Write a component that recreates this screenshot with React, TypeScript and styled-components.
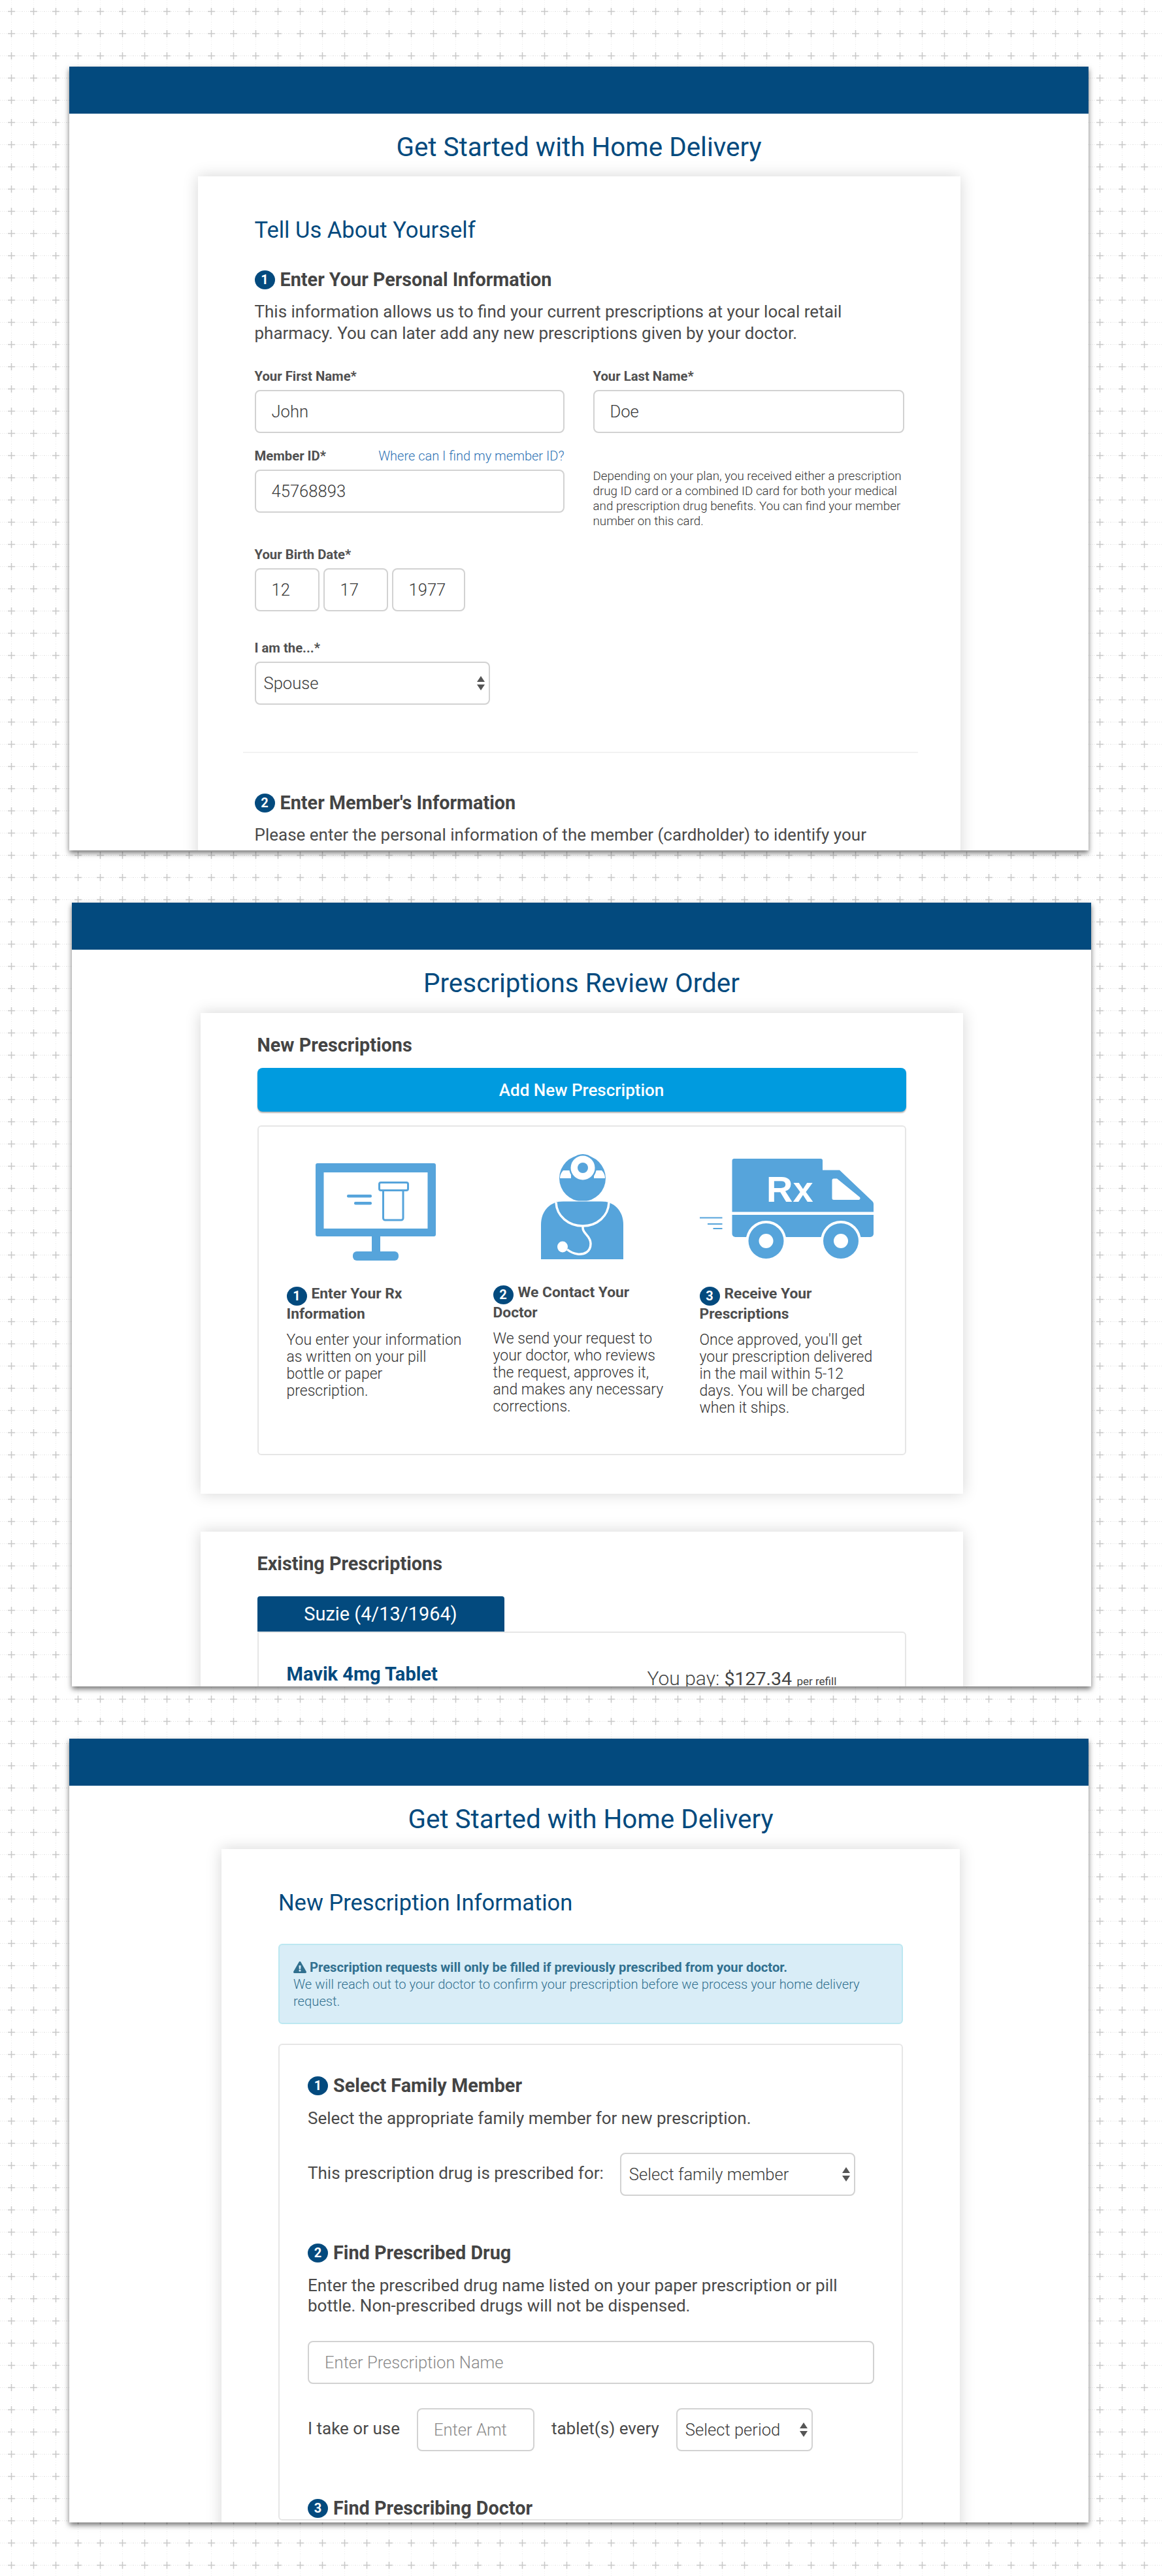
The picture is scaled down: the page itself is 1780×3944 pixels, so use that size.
import React from "react";
import styled, { createGlobalStyle } from "styled-components";
import { FaExclamationTriangle } from "react-icons/fa";

const NAVY = "#034a7e";
const ICON_BLUE = "#56a4db";
const TEXT = "#4a4a4a";

const tile = encodeURIComponent(
  `<svg xmlns="http://www.w3.org/2000/svg" width="34" height="34"><path d="M0 17.5H34" stroke="#e4e4e4" stroke-dasharray="1 2"/><path d="M17.5 0V34" stroke="#efefef" stroke-dasharray="1 2"/><path d="M12 17.5H23M17.5 12V23" stroke="#c8c8c8" stroke-width="1.500"/></svg>`
);

const GlobalStyle = createGlobalStyle`
  html, body {
    margin: 0;
    padding: 0;
    background: #fff url("data:image/svg+xml,${tile}") 0 0 repeat;
    font-family: Roboto, "Liberation Sans", sans-serif;
    color: ${TEXT};
  }
  * { box-sizing: border-box; }
`;

const Page = styled.div`
  display: flex;
  flex-direction: column;
  gap: 80px;
  width: 1780px;
  height: 3944px;
  padding-top: 102px;
  overflow: hidden;
`;

const Panel = styled.section<{ $x: number }>`
  width: 1560px;
  height: 1200px;
  margin-left: ${(p) => p.$x}px;
  background: #fff;
  overflow: hidden;
  box-shadow: 0 4px 8px rgba(0, 0, 0, 0.55);
  display: flex;
  flex-direction: column;
  align-items: center;
  flex: none;
`;

const TopBar = styled.div`
  width: 100%;
  height: 72px;
  flex: none;
  background: ${NAVY};
`;

const PageTitle = styled.h1<{ $shift?: number; $after?: number }>`
  margin: 28px 0 ${(p) => p.$after ?? 21}px ${(p) => p.$shift ?? 0}px;
  font-size: 40.4px;
  line-height: 48px;
  font-weight: 400;
  color: ${NAVY};
`;

const Card = styled.div<{ $width: number; $shift?: number; $pad: number }>`
  width: ${(p) => p.$width}px;
  margin-left: ${(p) => p.$shift ?? 0}px;
  padding: ${(p) => p.$pad}px 87px 59px 87px;
  background: #fff;
  flex: none;
  box-shadow: 0 0 22px rgba(0, 0, 0, 0.17);
`;

const CardTitle = styled.h2`
  margin: 0;
  font-size: 34.5px;
  line-height: 40px;
  font-weight: 400;
  color: ${NAVY};
`;

const Badge = styled.span`
  display: inline-flex;
  align-items: center;
  justify-content: center;
  width: 31px;
  height: 29px;
  border-radius: 50%;
  background: ${NAVY};
  color: #fff;
  font-size: 20px;
  font-weight: 700;
  line-height: 1;
  flex: none;
`;

const StepHead = styled.h3<{ $top: number }>`
  display: flex;
  align-items: center;
  gap: 8px;
  margin: ${(p) => p.$top}px 0 0;
  font-size: 28.8px;
  line-height: 34px;
  font-weight: 700;
  color: #444;
`;

const Para = styled.p<{ $top: number; $lh?: number }>`
  margin: ${(p) => p.$top}px 0 0;
  font-size: 26px;
  line-height: ${(p) => p.$lh ?? 33}px;
  font-weight: 400;
  color: ${TEXT};
`;

const FormRow = styled.div<{ $top: number }>`
  display: grid;
  grid-template-columns: 474px 476px;
  column-gap: 44px;
  height: 99px;
  margin-top: ${(p) => p.$top}px;
`;

const Stack = styled.div<{ $top?: number }>`
  margin-top: ${(p) => p.$top ?? 0}px;
`;

const LabelRow = styled.div`
  display: flex;
  justify-content: space-between;
  align-items: center;
  height: 24px;
  margin-bottom: 9px;
`;

const Label = styled.label`
  font-size: 20.3px;
  line-height: 24px;
  font-weight: 700;
  color: #505050;
`;

const HelpLink = styled.a`
  font-size: 20px;
  line-height: 24px;
  font-weight: 300;
  color: #2f74b5;
`;

const HelpText = styled.p`
  margin: 32px 0 0;
  font-size: 18.8px;
  line-height: 23px;
  font-weight: 300;
  color: #333;
`;

const Field = styled.div<{ $width?: number; $pad?: number; $empty?: boolean }>`
  display: flex;
  align-items: center;
  justify-content: space-between;
  width: ${(p) => (p.$width ? `${p.$width}px` : "100%")};
  height: 66px;
  padding: 0 ${(p) => p.$pad ?? 24}px;
  border: 2px solid #d2d2d2;
  border-radius: 8px;
  background: #fff;
  font-size: 25.6px;
  font-weight: 300;
  color: ${(p) => (p.$empty ? "#8a8a8a" : "#3a3a3a")};
  flex: none;
`;

const SelectField = styled(Field)`
  padding: 0 6px 0 12px;
  color: #3a3a3a;
`;

const DateRow = styled.div`
  display: flex;
  gap: 6px;
`;

const Divider = styled.hr`
  width: 1033px;
  height: 2px;
  margin: 72px 0 0 -18px;
  border: 0;
  background: #f2f2f2;
`;

const SectionName = styled.h3`
  margin: 0;
  font-size: 28.8px;
  line-height: 34px;
  font-weight: 700;
  color: #444;
`;

const AddButton = styled.button`
  display: block;
  width: 993px;
  height: 67px;
  margin-top: 18px;
  border: 0;
  border-radius: 8px;
  background: #009bdf;
  color: #fff;
  font: 500 26px Roboto, sans-serif;
  box-shadow: 0 2px 2px rgba(0, 0, 0, 0.3);
`;

const InfoBox = styled.div`
  display: grid;
  grid-template-columns: repeat(3, 316px);
  width: 993px;
  height: 505px;
  margin-top: 21px;
  padding: 42px 0 0 43px;
  border: 2px solid #e6e6e6;
  border-radius: 6px;
`;

const IconSlot = styled.div<{ $h: number; $left: number; $top: number }>`
  height: ${(p) => p.$h}px;
  padding: ${(p) => p.$top}px 0 0 ${(p) => p.$left}px;
`;

const ColHead = styled.h4`
  margin: 0;
  width: 270px;
  font-size: 22.8px;
  line-height: 30.5px;
  font-weight: 700;
  color: #4d4d4d;
  ${Badge} {
    margin: -4px 7px -4px 0;
    vertical-align: -3px;
  }
`;

const ColBody = styled.p`
  margin: 12px 0 0;
  width: 270px;
  font-size: 23px;
  line-height: 26px;
  font-weight: 300;
  color: #333;
`;

const SecondCard = styled(Card)`
  margin-top: 58px;
`;

const Tab = styled.div`
  width: 378px;
  height: 55px;
  margin-top: 33px;
  border-radius: 4px 4px 0 0;
  background: ${NAVY};
  color: #fff;
  font-size: 28.9px;
  line-height: 55px;
  text-align: center;
`;

const DrugBox = styled.div`
  display: grid;
  grid-template-columns: 552px 1fr;
  width: 993px;
  height: 300px;
  margin-top: -1px;
  padding: 46px 0 0 43px;
  border: 2px solid #e6e6e6;
  border-radius: 0 6px 6px 6px;
`;

const DrugName = styled.div`
  font-size: 29px;
  line-height: 34px;
  font-weight: 700;
  color: ${NAVY};
`;

const Price = styled.div`
  padding-top: 4px;
  font-size: 30px;
  line-height: 40px;
  font-weight: 300;
  color: #444;
  strong {
    font-size: 28.5px;
    font-weight: 400;
  }
  small {
    font-size: 17px;
    font-weight: 400;
  }
`;

const Alert = styled.div`
  height: 123px;
  margin-top: 43px;
  padding: 21px 20px 0 21px;
  border: 2px solid #bce8f1;
  border-radius: 6px;
  background: #d9edf7;
  color: #31708f;
  font-size: 20.2px;
  line-height: 26px;
  font-weight: 300;
  strong {
    font-weight: 700;
  }
  svg {
    width: 20px;
    height: 18px;
    margin-right: 5px;
    vertical-align: -2px;
  }
`;

const StepsBox = styled.div`
  margin-top: 30px;
  padding: 45px 42px 0 43px;
  border: 2px solid #e6e6e6;
  border-radius: 6px;
`;

const InlineRow = styled.div<{ $top: number; $gap: number }>`
  display: flex;
  align-items: center;
  gap: ${(p) => p.$gap}px;
  margin-top: ${(p) => p.$top}px;
  font-size: 26px;
  line-height: 30px;
  font-weight: 400;
  color: ${TEXT};
  span {
    position: relative;
    top: -2px;
  }
`;

const SelectArrows = () => (
  <svg width="12" height="24" viewBox="0 0 12 24" aria-hidden="true">
    <path d="M6 1 12 10H0ZM6 23 0 14H12Z" fill="#555" />
  </svg>
);

const MonitorIcon = () => (
  <svg width="184" height="149" viewBox="0 0 184 149" aria-hidden="true">
    <path
      fillRule="evenodd"
      fill={ICON_BLUE}
      d="M3 0H181a3 3 0 0 1 3 3V109a3 3 0 0 1-3 3H3a3 3 0 0 1-3-3V3a3 3 0 0 1 3-3ZM12.500 14V100H171.500V14Z"
    />
    <rect x="86" y="112" width="13" height="26" fill={ICON_BLUE} />
    <rect x="57" y="135" width="70" height="14" rx="6" fill={ICON_BLUE} />
    <rect x="97.500" y="29.500" width="44" height="12" rx="2.500" fill="none" stroke={ICON_BLUE} strokeWidth="3" />
    <path d="M103.500 42V84a3 3 0 0 0 3 3H131a3 3 0 0 0 3-3V42" fill="none" stroke={ICON_BLUE} strokeWidth="3" />
    <rect x="48" y="48" width="38" height="4.500" rx="2" fill={ICON_BLUE} />
    <rect x="59" y="59" width="27" height="4.500" rx="2" fill={ICON_BLUE} />
  </svg>
);

const DoctorIcon = () => (
  <svg width="126" height="161" viewBox="0 0 126 161" aria-hidden="true">
    <path fill={ICON_BLUE} d="M0 161V108C0 86 15 72 35 72H91C111 72 126 86 126 108V161Z" />
    <circle cx="63.500" cy="37" r="35.500" fill={ICON_BLUE} />
    <path fill="#fff" d="M29 37C29 32 31 28 34 25H46V37ZM98 37C98 32 96 28 93 25H81V37Z" />
    <circle cx="64" cy="21" r="21" fill={ICON_BLUE} />
    <circle cx="64" cy="21" r="18.500" fill="#fff" />
    <circle cx="64" cy="21" r="8" fill={ICON_BLUE} />
    <path d="M28 72H98" stroke="#fff" strokeWidth="1" />
    <path
      fill="none"
      stroke="#fff"
      strokeWidth="3.500"
      d="M23 74C24 95 42 110 64 110S103 95 104 74M64 110V113C64 122 76 125 76 137 76 150 66 154 56 153 49 152 45 150 40 146"
    />
    <ellipse cx="33" cy="142" rx="8" ry="8.500" fill="#fff" />
  </svg>
);

const TruckIcon = () => (
  <svg width="266" height="154" viewBox="0 0 266 154" aria-hidden="true">
    <path stroke={ICON_BLUE} strokeWidth="2.200" d="M0 90.500H34.500M12 100H34.500M20.500 107H34.500" />
    <path
      fill={ICON_BLUE}
      d="M52 0H185a3 3 0 0 1 3 3V17.500H214L264 65a6 6 0 0 1 2 4V81.500H49.500V3a3 3 0 0 1 2.500-3Z"
    />
    <path fill="#fff" d="M205 30.500H210L245 59a2.500 2.500 0 0 1-1.500 4H205a2.500 2.500 0 0 1-2.500-2.500V33a2.500 2.500 0 0 1 2.500-2.500Z" />
    <path fill={ICON_BLUE} d="M49.500 86H266V115a5 5 0 0 1-5 5H54.500a5 5 0 0 1-5-5Z" />
    <circle cx="101.500" cy="126" r="31" fill="#fff" />
    <circle cx="216" cy="126" r="31" fill="#fff" />
    <circle cx="101.500" cy="126" r="27" fill={ICON_BLUE} />
    <circle cx="101.500" cy="126" r="11" fill="#fff" />
    <circle cx="216" cy="126" r="27" fill={ICON_BLUE} />
    <circle cx="216" cy="126" r="11" fill="#fff" />
    <text x="102" y="66" fontFamily="Liberation Sans, Arial, sans-serif" fontWeight="700" fontSize="56" fill="#fff">
      Rx
    </text>
  </svg>
);

export default function App() {
  return (
    <>
      <GlobalStyle />
      <Page>
        <Panel $x={106}>
          <TopBar />
          <PageTitle $after={20}>Get Started with Home Delivery</PageTitle>
          <Card $width={1167} $pad={62}>
            <CardTitle>Tell Us About Yourself</CardTitle>
            <StepHead $top={39}>
              <Badge>1</Badge>Enter Your Personal Information
            </StepHead>
            <Para $top={16}>
              This information allows us to find your current prescriptions at your local retail pharmacy. You can later add any new prescriptions given by your doctor.
            </Para>
            <FormRow $top={37}>
              <div>
                <LabelRow>
                  <Label>Your First Name*</Label>
                </LabelRow>
                <Field>John</Field>
              </div>
              <div>
                <LabelRow>
                  <Label>Your Last Name*</Label>
                </LabelRow>
                <Field>Doe</Field>
              </div>
            </FormRow>
            <FormRow $top={23}>
              <div>
                <LabelRow>
                  <Label>Member ID*</Label>
                  <HelpLink>Where can I find my member ID?</HelpLink>
                </LabelRow>
                <Field>45768893</Field>
              </div>
              <HelpText>
                Depending on your plan, you received either a prescription drug ID card or a combined ID card for both your medical and prescription drug benefits. You can find your member number on this card.
              </HelpText>
            </FormRow>
            <Stack $top={52}>
              <LabelRow>
                <Label>Your Birth Date*</Label>
              </LabelRow>
              <DateRow>
                <Field $width={99}>12</Field>
                <Field $width={99}>17</Field>
                <Field $width={112}>1977</Field>
              </DateRow>
            </Stack>
            <Stack $top={44}>
              <LabelRow>
                <Label>I am the...*</Label>
              </LabelRow>
              <SelectField $width={360}>
                Spouse
                <SelectArrows />
              </SelectField>
            </Stack>
            <Divider />
            <StepHead $top={59}>
              <Badge>2</Badge>Enter Member's Information
            </StepHead>
            <Para $top={16}>
              Please enter the personal information of the member (cardholder) to identify your
            </Para>
          </Card>
        </Panel>

        <Panel $x={110}>
          <TopBar />
          <PageTitle>Prescriptions Review Order</PageTitle>
          <Card $width={1167} $pad={32}>
            <SectionName>New Prescriptions</SectionName>
            <AddButton>Add New Prescription</AddButton>
            <InfoBox>
              <div>
                <IconSlot $h={199} $top={14} $left={44}>
                  <MonitorIcon />
                </IconSlot>
                <ColHead>
                  <Badge>1</Badge>Enter Your Rx Information
                </ColHead>
                <ColBody>You enter your information as written on your pill bottle or paper prescription.</ColBody>
              </div>
              <div>
                <IconSlot $h={197} $top={0} $left={73}>
                  <DoctorIcon />
                </IconSlot>
                <ColHead>
                  <Badge>2</Badge>We Contact Your Doctor
                </ColHead>
                <ColBody>We send your request to your doctor, who reviews the request, approves it, and makes any necessary corrections.</ColBody>
              </div>
              <div>
                <IconSlot $h={199} $top={7} $left={0}>
                  <TruckIcon />
                </IconSlot>
                <ColHead>
                  <Badge>3</Badge>Receive Your Prescriptions
                </ColHead>
                <ColBody>Once approved, you'll get your prescription delivered in the mail within 5-12 days. You will be charged when it ships.</ColBody>
              </div>
            </InfoBox>
          </Card>
          <SecondCard $width={1167} $pad={32}>
            <SectionName>Existing Prescriptions</SectionName>
            <Tab>Suzie (4/13/1964)</Tab>
            <DrugBox>
              <DrugName>Mavik 4mg Tablet</DrugName>
              <Price>
                You pay: <strong>$127.34</strong> <small>per refill</small>
              </Price>
            </DrugBox>
          </SecondCard>
        </Panel>

        <Panel $x={106}>
          <TopBar />
          <PageTitle $shift={36}>Get Started with Home Delivery</PageTitle>
          <Card $width={1130} $shift={36} $pad={62}>
            <CardTitle>New Prescription Information</CardTitle>
            <Alert>
              <FaExclamationTriangle />
              <strong>Prescription requests will only be filled if previously prescribed from your doctor.</strong>
              <br />
              We will reach out to your doctor to confirm your prescription before we process your home delivery request.
            </Alert>
            <StepsBox>
              <StepHead $top={0}>
                <Badge>1</Badge>Select Family Member
              </StepHead>
              <Para $top={18} $lh={31}>
                Select the appropriate family member for new prescription.
              </Para>
              <InlineRow $top={37} $gap={25}>
                <span>This prescription drug is prescribed for:</span>
                <SelectField $width={360}>
                  Select family member
                  <SelectArrows />
                </SelectField>
              </InlineRow>
              <StepHead $top={70}>
                <Badge>2</Badge>Find Prescribed Drug
              </StepHead>
              <Para $top={18} $lh={31}>
                Enter the prescribed drug name listed on your paper prescription or pill bottle. Non-prescribed drugs will not be dispensed.
              </Para>
              <Stack $top={38}>
                <Field $empty>Enter Prescription Name</Field>
              </Stack>
              <InlineRow $top={37} $gap={26}>
                <span>I take or use</span>
                <Field $width={180} $empty>
                  Enter Amt
                </Field>
                <span>tablet(s) every</span>
                <SelectField $width={209}>
                  Select period
                  <SelectArrows />
                </SelectField>
              </InlineRow>
              <StepHead $top={70}>
                <Badge>3</Badge>Find Prescribing Doctor
              </StepHead>
            </StepsBox>
          </Card>
        </Panel>
      </Page>
    </>
  );
}
